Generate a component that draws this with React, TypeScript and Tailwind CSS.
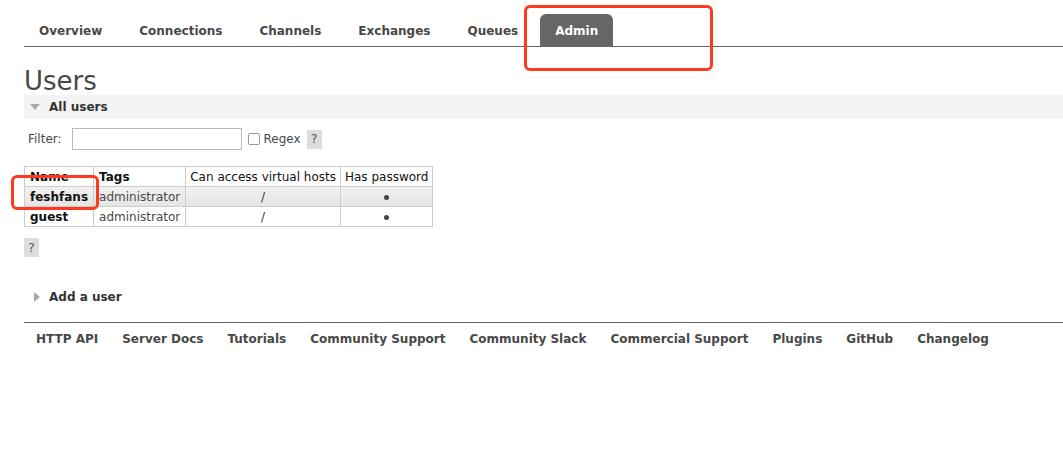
import React from 'react';

const navItems = ['Overview', 'Connections', 'Channels', 'Exchanges', 'Queues', 'Admin'];
const footerLinks = [
  'HTTP API',
  'Server Docs',
  'Tutorials',
  'Community Support',
  'Community Slack',
  'Commercial Support',
  'Plugins',
  'GitHub',
  'Changelog',
];

const users = [
  { name: 'feshfans', tags: 'administrator', vhosts: '/', highlight: true },
  { name: 'guest', tags: 'administrator', vhosts: '/', highlight: false },
];

const Help: React.FC<{ className?: string }> = ({ className = '' }) => (
  <span className={`inline-flex h-[19px] w-[15px] items-center justify-center bg-[#ddd] text-[12px] text-[#555] ${className}`}>?</span>
);

const App: React.FC = () => {
  return (
    <div
      className="relative h-[453px] w-[1063px] overflow-hidden bg-white pl-[24px] text-[12px] text-[#484848]"
      style={{ fontFamily: '"DejaVu Sans", Verdana, sans-serif' }}
    >
      {/* top nav */}
      <div className="flex h-[47px] items-end border-b border-[#666] pt-[14px]">
        {navItems.map((item) => {
          const active = item === 'Admin';
          return (
            <div
              key={item}
              className={`mr-[7px] flex h-[32px] shrink-0 items-center whitespace-nowrap px-[15px] pt-[2px] text-[12px] font-bold ${
                active ? 'rounded-t-[6px] bg-[#666] text-white' : 'text-[#484848]'
              }`}
            >
              {item}
            </div>
          );
        })}
      </div>

      <h1 className="mt-[20px] text-[26px] leading-[28px] font-normal text-[#484848]">Users</h1>

      {/* section header */}
      <div className="flex h-[24px] items-center bg-[#f4f4f4] pl-[6px] font-bold text-[#333]">
        <span className="mr-[9px] h-0 w-0 border-x-[5px] border-t-[6px] border-x-transparent border-t-[#aaa]" />
        All users
      </div>

      {/* filter */}
      <div className="mt-[9px] flex h-[22px] items-center pl-[4px]">
        <span className="mr-[10px]">Filter:</span>
        <input className="h-[22px] w-[170px] border border-[#bbb] bg-white" />
        <span className="ml-[6px] mr-[4px] inline-block h-[12px] w-[12px] rounded-[2px] border border-[#999] bg-white" />
        <span>Regex</span>
        <Help className="ml-[6px]" />
      </div>

      {/* users table */}
      <table className="mt-[16px] border-collapse whitespace-nowrap text-[12px]">
        <thead>
          <tr className="h-[20px]">
            <th className="border border-[#ccc] px-[5px] py-0 text-left font-bold text-[#111]">Name</th>
            <th className="border border-[#ccc] px-[5px] py-0 text-left font-bold text-[#111]">Tags</th>
            <th className="border border-[#ccc] px-[4px] py-0 text-left font-normal text-[#111]">Can access virtual hosts</th>
            <th className="border border-[#ccc] px-[4px] py-0 text-left font-normal text-[#111]">Has password</th>
          </tr>
        </thead>
        <tbody>
          {users.map((u) => (
            <tr key={u.name} className={`h-[20px] ${u.highlight ? 'bg-gradient-to-b from-[#f2f2f2] to-[#e4e4e4]' : 'bg-white'}`}>
              <td className="border border-[#ccc] px-[5px] py-0 font-bold text-[#111]">{u.name}</td>
              <td className="border border-[#ccc] px-[5px] py-0 text-[#484848]">{u.tags}</td>
              <td className="border border-[#ccc] px-[4px] py-0 text-center text-[#333]">{u.vhosts}</td>
              <td className="border border-[#ccc] px-[4px] py-0 text-center">
                <span className="inline-block h-[5px] w-[5px] rounded-full bg-[#444] align-middle" />
              </td>
            </tr>
          ))}
        </tbody>
      </table>

      <Help className="mt-[11px]" />

      {/* add a user */}
      <div className="mt-[30px] flex h-[20px] items-center pl-[10px] font-bold text-[#333]">
        <span className="mr-[9px] h-0 w-0 border-y-[5px] border-l-[6px] border-y-transparent border-l-[#aaa]" />
        Add a user
      </div>

      {/* footer */}
      <div className="mt-[15px] flex h-[33px] items-center border-t border-[#666] pl-[12px]">
        {footerLinks.map((l) => (
          <span key={l} className="mr-[24px] shrink-0 whitespace-nowrap font-bold text-[#484848]">
            {l}
          </span>
        ))}
      </div>

      {/* screenshot annotations */}
      <div className="absolute left-[524px] top-[5px] h-[66px] w-[189px] rounded-[6px] border-[3px] border-[#fd3a1e]" />
      <div className="absolute left-[11px] top-[175px] h-[35px] w-[88px] rounded-[6px] border-[3px] border-[#fd3a1e]" />
    </div>
  );
};

export default App;
